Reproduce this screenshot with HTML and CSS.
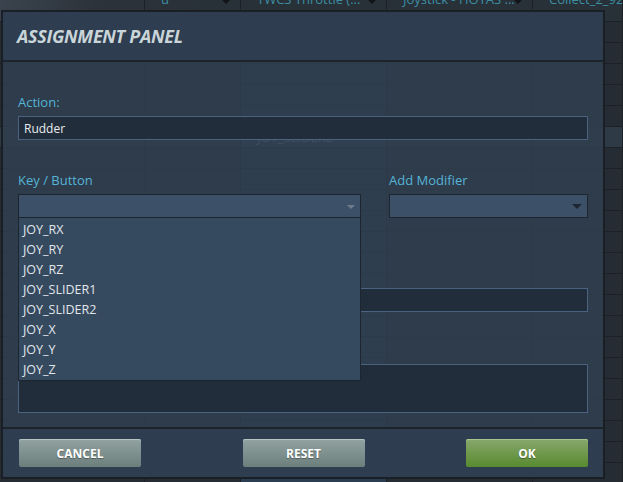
FILE: index.html
```html
<!DOCTYPE html>
<html lang="en">
<head>
<meta charset="utf-8">
<title>Assignment Panel</title>
<link rel="stylesheet" href="styles.css">
</head>
<body>
<div class="desk">
  <div class="grid-head">
    <div class="hcell"></div>
    <div class="hcell"><span>u</span><i class="caret"></i></div>
    <div class="hcell"><span>TWCS Throttle (...</span><i class="caret"></i></div>
    <div class="hcell"><span>Joystick - HOTAS ...</span><i class="caret"></i></div>
    <div class="hcell"><span>Collect_2_92...</span></div>
  </div>
  <div class="grid-body">
    <div class="row"><i></i><i></i><i class="hl"></i><i></i><i></i></div>
    <div class="row"><i></i><i></i><i class="hl"></i><i></i><i></i></div>
    <div class="row"><i></i><i></i><i class="hl"></i><i></i><i></i></div>
    <div class="row"><i></i><i></i><i class="hl"></i><i></i><i></i></div>
    <div class="row"><i></i><i></i><i class="hl"></i><i></i><i></i></div>
    <div class="row sel"><i></i><i></i><i class="hl">JOY_SLIDER2</i><i></i><i></i></div>
    <div class="row"><i></i><i></i><i class="hl"></i><i></i><i></i></div>
    <div class="row"><i></i><i></i><i class="hl"></i><i></i><i></i></div>
    <div class="row"><i></i><i></i><i class="hl"></i><i></i><i></i></div>
    <div class="row"><i></i><i></i><i class="hl"></i><i></i><i></i></div>
    <div class="row"><i></i><i></i><i class="hl"></i><i></i><i></i></div>
    <div class="row"><i></i><i></i><i class="hl"></i><i></i><i></i></div>
    <div class="row"><i></i><i></i><i class="hl"></i><i></i><i></i></div>
    <div class="row"><i></i><i></i><i class="hl"></i><i></i><i></i></div>
    <div class="row"><i></i><i></i><i class="hl"></i><i></i><i></i></div>
    <div class="row"><i></i><i></i><i class="hl"></i><i></i><i></i></div>
    <div class="row"><i></i><i></i><i class="hl"></i><i></i><i></i></div>
    <div class="row"><i></i><i></i><i class="hl"></i><i></i><i></i></div>
    <div class="row"><i></i><i></i><i class="hl"></i><i></i><i></i></div>
    <div class="row"><i></i><i></i><i class="hl"></i><i></i><i></i></div>
    <div class="row"><i></i><i></i><i class="hl"></i><i></i><i></i></div>
    <div class="row"><i></i><i></i><i class="hl"></i><i></i><i></i></div>
  </div>
</div>

<div class="modal">
  <div class="modal-head">
    <h1 class="modal-title">ASSIGNMENT PANEL</h1>
  </div>
  <div class="modal-body">
    <label class="label">Action:</label>
    <input class="field" type="text" value="Rudder">

    <div class="pair">
      <div class="col">
        <label class="label">Key / Button</label>
        <div class="select">
          <span class="arrow arrow-light"></span>
          <ul class="menu">
            <li>JOY_RX</li>
            <li>JOY_RY</li>
            <li>JOY_RZ</li>
            <li>JOY_SLIDER1</li>
            <li>JOY_SLIDER2</li>
            <li>JOY_X</li>
            <li>JOY_Y</li>
            <li>JOY_Z</li>
          </ul>
        </div>
      </div>
      <div class="col">
        <label class="label">Add Modifier</label>
        <div class="select">
          <span class="arrow arrow-dark"></span>
        </div>
      </div>
    </div>

    <input class="field field-second" type="text">
    <textarea class="area"></textarea>
  </div>
  <div class="modal-foot">
    <button class="btn btn-gray">CANCEL</button>
    <button class="btn btn-gray">RESET</button>
    <button class="btn btn-green">OK</button>
  </div>
</div>
</body>
</html>
```
FILE: styles.css
```css
html, body {
  margin: 0;
  padding: 0;
}
body {
  width: 623px;
  height: 482px;
  overflow: hidden;
  position: relative;
  background: #262c34;
  font-family: "Open Sans", "Noto Sans", sans-serif;
}

/* background table */
.desk {
  width: 623px;
}
.grid-head {
  display: grid;
  grid-template-columns: 145px 96px 146px 146px 1fr;
  height: 22px;
  box-sizing: border-box;
  border-bottom: 1px solid #1c2127;
  background: linear-gradient(110deg, #3b444e 0, #2c333b 90px, #283038 200px);
}
.hcell {
  position: relative;
  border-right: 1px solid #1c2127;
  padding-left: 16px;
  overflow: hidden;
  white-space: nowrap;
}
.hcell span {
  display: block;
  margin-top: -9px;
  line-height: 16px;
  font-size: 13px;
  color: #3c8fa3;
}
.caret {
  position: absolute;
  right: 10px;
  top: 0;
  width: 0;
  height: 0;
  border-left: 4px solid transparent;
  border-right: 4px solid transparent;
  border-top: 4px solid #111519;
}
.row {
  display: grid;
  grid-template-columns: 145px 96px 146px 146px 1fr;
  height: 21px;
  box-sizing: border-box;
  border-bottom: 1px solid #1c2127;
}
.row i {
  border-right: 1px solid #1c2127;
  font-style: normal;
  font-size: 13px;
  line-height: 20px;
  padding-left: 16px;
  color: #d0d8de;
  white-space: nowrap;
  overflow: hidden;
}
.row i.hl {
  background: #2b3d51;
}
.row.sel {
  background: #2f3a47;
}
.row.sel i.hl {
  background: #35506c;
}

/* modal */
.modal {
  position: absolute;
  left: 1px;
  top: 10px;
  width: 604px;
  height: 469px;
  box-sizing: border-box;
  border: 2px solid #1a1f25;
  display: flex;
  flex-direction: column;
}
.modal-head {
  height: 50px;
  box-sizing: border-box;
  background: #2e3d4f;
  border-bottom: 2px solid #1c232b;
  display: flex;
  align-items: center;
  padding-left: 14px;
}
.modal-title {
  margin: 0;
  font-family: "Open Sans", sans-serif;
  font-size: 18px;
  font-weight: 700;
  font-style: italic;
  letter-spacing: -0.3px;
  color: #c9d5d9;
}
.modal-body {
  flex: 1;
  background: rgba(48, 62, 78, 0.9);
  padding: 32px 15px 14px 15px;
  display: flex;
  flex-direction: column;
}
.label {
  display: block;
  height: 16px;
  line-height: 16px;
  font-size: 13px;
  color: #56b4d7;
  margin-bottom: 6px;
}
.field {
  display: block;
  width: 100%;
  height: 24px;
  box-sizing: border-box;
  margin: 0;
  border: 1px solid #4a6381;
  background: #222d3b;
  color: #e8ecef;
  font-family: "Open Sans", sans-serif;
  font-size: 12px;
  padding: 0 5px;
  outline: none;
}
.pair {
  display: grid;
  grid-template-columns: 343px 199px;
  column-gap: 28px;
  margin-top: 32px;
}
.col {
  position: relative;
}
.select {
  position: relative;
  height: 24px;
  box-sizing: border-box;
  border: 1px solid #1c2530;
  background: #3c5068;
}
.arrow {
  position: absolute;
  top: 10px;
  width: 0;
  height: 0;
}
.arrow-light {
  right: 5px;
  border-left: 4px solid transparent;
  border-right: 4px solid transparent;
  border-top: 4px solid #6c7c8b;
}
.arrow-dark {
  right: 5px;
  top: 9px;
  border-left: 5px solid transparent;
  border-right: 5px solid transparent;
  border-top: 5px solid #1d2631;
}
.menu {
  position: absolute;
  z-index: 2;
  left: -1px;
  right: -1px;
  top: 22px;
  margin: 0;
  padding: 2px 0 0;
  list-style: none;
  background: #364a5f;
  border: 1px solid #1d2530;
}
.menu li {
  height: 20px;
  line-height: 20px;
  padding-left: 4px;
  font-size: 12.5px;
  color: #e2e7eb;
}
.field-second {
  margin-top: 70px;
}
.area {
  display: block;
  width: 100%;
  height: 49px;
  box-sizing: border-box;
  margin: 52px 0 0;
  border: 1px solid #4a6381;
  background: #222d3b;
  resize: none;
  outline: none;
}
.modal-foot {
  height: 50px;
  box-sizing: border-box;
  border-top: 2px solid #1c232b;
  background: #2e3d4f;
  padding: 10px 15px 10px 16px;
  display: flex;
  justify-content: space-between;
  align-items: flex-start;
}
.btn {
  width: 122px;
  height: 28px;
  margin: 0;
  padding: 0;
  border: 0;
  border-radius: 2px;
  font-family: "Open Sans", sans-serif;
  font-weight: 700;
  font-size: 12px;
  color: #ffffff;
  text-shadow: 0 1px 1px rgba(0, 0, 0, 0.35);
  cursor: pointer;
}
.btn-gray {
  background: linear-gradient(#91a2a0, #6d7f7d);
  box-shadow: inset 0 1px 0 #b7c4c3;
}
.btn-green {
  background: linear-gradient(#87a86c, #588a2f);
  box-shadow: inset 0 1px 0 #a6c58b;
}
```
